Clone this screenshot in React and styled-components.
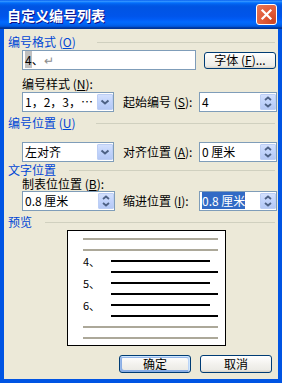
import React from "react";
import styled, { createGlobalStyle, css } from "styled-components";

const Global = createGlobalStyle`
  html, body { margin: 0; padding: 0; background: #ECE9D8; }
  body { font-family: "Noto Sans CJK SC", "Liberation Sans", sans-serif; font-size: 12px; }
  * { box-sizing: border-box; }
`;

const Window = styled.div`
  width: 282px;
  height: 383px;
  display: flex;
  flex-direction: column;
  overflow: hidden;
  background: #0054E3;
`;

const TitleBar = styled.div`
  height: 29px;
  flex: none;
  display: flex;
  align-items: center;
  justify-content: space-between;
  padding: 0 5px 0 7px;
  background: linear-gradient(180deg, #0058EE 0%, #3593FF 4%, #288EFF 6%, #127DFF 8%, #036FFC 10%, #0262EE 14%, #0057E5 20%, #0054E3 24%, #0055EB 56%, #005BF5 66%, #026AFE 76%, #0062EF 86%, #0052D6 92%, #0040AB 94%, #003092 100%);
`;

const Title = styled.div`
  color: #fff;
  font-weight: bold;
  font-size: 14px;
  line-height: 16px;
  text-shadow: 1px 1px #0F1089;
`;

const CloseBtn = styled.div`
  width: 21px;
  height: 21px;
  border: 1px solid #fff;
  border-radius: 3px;
  background: radial-gradient(circle at 85% 85%, #CC4625 0%, #DC5431 30%, #E36240 60%, #E5795B 100%);
  display: flex;
  align-items: center;
  justify-content: center;
`;

const Client = styled.div`
  flex: 1;
  display: flex;
  flex-direction: column;
  background: #ECE9D8;
  margin: 0 4px 4px 4px;
  padding: 6px 3px 0 4px;
`;

const Header = styled.div`
  display: flex;
  align-items: center;
  height: 14px;
  color: #0046D5;
  font-size: 12px;
  line-height: 14px;
  white-space: nowrap;
  margin-top: ${(p) => p.$mt || 0}px;
`;

const Rule = styled.div`
  flex: 1;
  height: 1px;
  background: #D0D0BF;
  margin-left: ${(p) => p.$ml}px;
`;

const U = styled.span`
  text-decoration: underline;
`;

const Row = styled.div`
  display: flex;
  align-items: center;
  padding-left: 14px;
  margin-top: ${(p) => p.$mt || 0}px;
  height: ${(p) => p.$h || 20}px;
`;

const Label = styled.div`
  font-size: 12px;
  line-height: 14px;
  height: 14px;
  white-space: nowrap;
  color: #000;
  ${(p) => p.$w && css`width: ${p.$w}px; flex: none;`}
  margin-left: ${(p) => p.$ml || 0}px;
`;

const StackLabel = styled(Label)`
  padding-left: 14px;
  margin-top: ${(p) => p.$mt || 0}px;
`;

const Field = styled.div`
  width: ${(p) => p.$w}px;
  height: 20px;
  flex: none;
  border: 1px solid #7F9DB9;
  background: #fff;
  display: flex;
  align-items: center;
  padding-left: 2px;
  font-size: 12px;
  line-height: 14px;
  white-space: nowrap;
`;

const FieldText = styled.span`
  flex: 1;
`;

const Sel = styled.span`
  background: ${(p) => (p.$grey ? "#C0C0C0" : "#316AC5")};
  color: ${(p) => (p.$grey ? "#000" : "#fff")};
`;

const Mark = styled.span`
  color: #8C8C8C;
`;

const ArrowBox = styled.div`
  width: 16px;
  height: 16px;
  flex: none;
  border: 1px solid #BCCEF5;
  border-radius: 1px;
  background: linear-gradient(180deg, #D3E0FD 0%, #C1D3FB 50%, #B4C8F5 100%);
  display: flex;
  align-items: center;
  justify-content: center;
`;

const PushButton = styled.div`
  width: 72px;
  height: ${(p) => p.$h || 18}px;
  flex: none;
  border: 1px solid #003C74;
  border-radius: 3px;
  background: linear-gradient(180deg, #FFFFFF 0%, #F3F2EE 50%, #ECEBE6 86%, #D6D0C5 100%);
  display: flex;
  align-items: center;
  justify-content: center;
  font-size: 12px;
  line-height: 14px;
  color: #000;
  white-space: nowrap;
  margin-left: ${(p) => p.$ml || 0}px;
  ${(p) =>
    p.$default &&
    css`
      box-shadow: inset -1px 1px #CEE7FF, inset 1px 2px #98B8EA, inset -2px 2px #BCD4F6, inset 1px -1px #89ADE4, inset 2px -2px #89ADE4;
    `}
`;

const Preview = styled.div`
  margin-top: 1px;
  margin-left: 59px;
  width: 159px;
  height: 116px;
  border: 1px solid #000;
  background: #fff;
  padding: 7px 0 0 15px;
  display: flex;
  flex-direction: column;
  gap: 9px;
`;

const Bar = styled.div`
  height: 2px;
  flex: none;
  width: ${(p) => p.$w}px;
  background: ${(p) => (p.$grey ? "#ACA899" : "#000")};
  margin-left: ${(p) => p.$ml || 0}px;
`;

const BarRow = styled.div`
  display: flex;
  align-items: center;
  height: 2px;
`;

const Num = styled.div`
  width: 28px;
  flex: none;
  font-family: "Noto Sans CJK SC", sans-serif;
  font-size: 11px;
  line-height: 12px;
  color: #000;
`;

const BottomRow = styled.div`
  display: flex;
  justify-content: flex-end;
  padding-right: 3px;
  margin-top: 9px;
`;

const Chevron = () => (
  <svg width="14" height="14" viewBox="0 0 14 14">
    <path d="M3.5 5.5 L7 8.5 L10.5 5.5" fill="none" stroke="#4D6185" strokeWidth="2" />
  </svg>
);

const Spin = () => (
  <svg width="14" height="14" viewBox="0 0 14 14">
    <path d="M4 5 L7 2.5 L10 5" fill="none" stroke="#4D6185" strokeWidth="1.8" />
    <path d="M4 9 L7 11.5 L10 9" fill="none" stroke="#4D6185" strokeWidth="1.8" />
  </svg>
);

const Combo = ({ w, children }) => (
  <Field $w={w}>
    <FieldText>{children}</FieldText>
    <ArrowBox>
      <Chevron />
    </ArrowBox>
  </Field>
);

const SpinField = ({ w, children }) => (
  <Field $w={w}>
    <FieldText>{children}</FieldText>
    <ArrowBox>
      <Spin />
    </ArrowBox>
  </Field>
);

const Item = ({ n }) => (
  <>
    <BarRow>
      <Num>{n}、</Num>
      <Bar $w={99} />
    </BarRow>
    <Bar $w={107} $ml={28} />
  </>
);

export default function App() {
  return (
    <>
      <Global />
      <Window>
        <TitleBar>
          <Title>自定义编号列表</Title>
          <CloseBtn>
            <svg width="13" height="13" viewBox="0 0 13 13">
              <path d="M2.5 2.5 L10.5 10.5 M10.5 2.5 L2.5 10.5" stroke="#fff" strokeWidth="2.2" strokeLinecap="square" />
            </svg>
          </CloseBtn>
        </TitleBar>
        <Client>
          <Header>
            编号格式 (<U>O</U>)
            <Rule $ml={21} />
          </Header>
          <Row $mt={1}>
            <Field $w={174}>
              <FieldText>
                <Sel $grey>4</Sel>、<Mark>↵</Mark>
              </FieldText>
            </Field>
            <PushButton $h={17} $ml={8}>
              字体 (<U>F</U>)...
            </PushButton>
          </Row>
          <StackLabel $mt={7}>
            编号样式 (<U>N</U>):
          </StackLabel>
          <Row $mt={1}>
            <Combo w={92}>1，2，3，⋯</Combo>
            <Label $ml={9} $w={76}>
              起始编号 (<U>S</U>):
            </Label>
            <SpinField w={78}>4</SpinField>
          </Row>
          <Header $mt={4}>
            编号位置 (<U>U</U>)
            <Rule $ml={21} />
          </Header>
          <Row $mt={12}>
            <Combo w={92}>左对齐</Combo>
            <Label $ml={9} $w={76}>
              对齐位置 (<U>A</U>):
            </Label>
            <SpinField w={78}>0 厘米</SpinField>
          </Row>
          <Header $mt={1}>
            文字位置
            <Rule $ml={13} />
          </Header>
          <StackLabel>
            制表位位置 (<U>B</U>):
          </StackLabel>
          <Row>
            <SpinField w={93}>0.8 厘米</SpinField>
            <Label $ml={8} $w={76}>
              缩进位置 (<U>I</U>):
            </Label>
            <SpinField w={78}>
              <Sel>0.8 厘米</Sel>
            </SpinField>
          </Row>
          <Header $mt={4}>
            预览
            <Rule $ml={13} />
          </Header>
          <Preview>
            <Bar $w={135} $grey />
            <Bar $w={135} $grey />
            <Item n={4} />
            <Item n={5} />
            <Item n={6} />
            <Bar $w={135} $grey />
            <Bar $w={135} $grey />
          </Preview>
          <BottomRow>
            <PushButton $default>确定</PushButton>
            <PushButton $ml={9}>取消</PushButton>
          </BottomRow>
        </Client>
      </Window>
    </>
  );
}
